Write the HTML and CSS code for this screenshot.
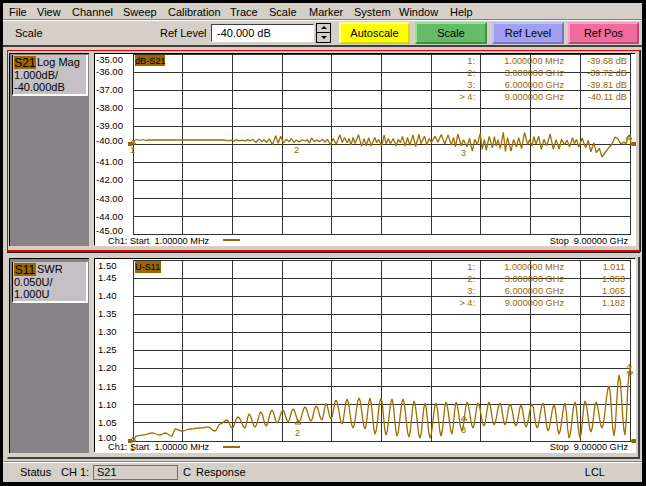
FILE: index.html
```html
<!DOCTYPE html>
<html lang="en">
<head>
    <meta charset="UTF-8">
    <title>Network Analyzer</title>
    <link rel="stylesheet" href="styles.css">
</head>
<body>

    <div class="app">
        <div class="menu">
            <span>File</span>
            <span>View</span>
            <span>Channel</span>
            <span>Sweep</span>
            <span>Calibration</span>
            <span>Trace</span>
            <span>Scale</span>
            <span>Marker</span>
            <span>System</span>
            <span>Window</span>
            <span>Help</span>
        </div>

        <div class="toolbar">
            <span class="tool-title">Scale</span>
            <span class="tool-label">Ref Level</span>
            <div class="input">-40.000 dB</div>
            <div class="spin">
                <div class="spin-btn"><i class="up"></i></div>
                <div class="spin-btn"><i class="down"></i></div>
            </div>
            <div class="btn yellow">Autoscale</div>
            <div class="btn green">Scale</div>
            <div class="btn blue">Ref Level</div>
            <div class="btn pink">Ref Pos</div>
        </div>

        <div class="traces">
            <div class="panel active">
                <div class="side">
                    <div class="info">
                        <div class="info-top"><span class="tag">S21</span><span>Log Mag</span></div>
                        <div>1.000dB/</div>
                        <div>-40.000dB</div>
                    </div>
                </div>
                <svg class="chart chart-top" id="chartTop" viewBox="95 53 541 192">
                    <text class="axis" x="96" y="62">-35.00</text>
                    <text class="axis" x="96" y="74">-36.00</text>
                    <text class="axis" x="96" y="92">-37.00</text>
                    <text class="axis" x="96" y="110">-38.00</text>
                    <text class="axis" x="96" y="128">-39.00</text>
                    <text class="axis" x="96" y="143">-40.00</text>
                    <text class="axis" x="96" y="164">-41.00</text>
                    <text class="axis" x="96" y="182">-42.00</text>
                    <text class="axis" x="96" y="201">-43.00</text>
                    <text class="axis" x="96" y="219">-44.00</text>
                    <text class="axis" x="96" y="233">-45.00</text>

                    <rect class="tag-bg" x="135" y="54" width="30" height="11"></rect>
                    <text x="135" y="63">dB-S21</text>

                    <text class="mk" x="475" y="63" text-anchor="end">1:</text>
                    <text class="mk" x="564" y="63" text-anchor="end">1.000000 MHz</text>
                    <text class="mk" x="627" y="63" text-anchor="end">-39.68 dB</text>
                    <text class="mk" x="475" y="75" text-anchor="end">2:</text>
                    <text class="mk" x="564" y="75" text-anchor="end">3.000000 GHz</text>
                    <text class="mk" x="627" y="75" text-anchor="end">-39.72 dB</text>
                    <text class="mk" x="475" y="87" text-anchor="end">3:</text>
                    <text class="mk" x="564" y="87" text-anchor="end">6.000000 GHz</text>
                    <text class="mk" x="627" y="87" text-anchor="end">-39.81 dB</text>
                    <text class="mk" x="475" y="99" text-anchor="end">&gt; 4:</text>
                    <text class="mk" x="564" y="99" text-anchor="end">9.000000 GHz</text>
                    <text class="mk" x="627" y="99" text-anchor="end">-40.11 dB</text>

                    <text class="mk" x="130" y="152">1</text>
                    <text class="mk" x="294" y="152">2</text>
                    <text class="mk" x="461" y="155">3</text>

                    <text x="108" y="243">Ch1: Start&#160;&#160;1.00000 MHz</text>
                    <rect class="tag-bg" x="223" y="238" width="17" height="2"></rect>
                    <text x="628" y="243" text-anchor="end">Stop&#160;&#160;9.00000 GHz</text>
                </svg>
            </div>

            <div class="panel second">
                <div class="side">
                    <div class="info">
                        <div class="info-top"><span class="tag">S11</span><span>SWR</span></div>
                        <div>0.050U/</div>
                        <div>1.000U</div>
                    </div>
                </div>
                <svg class="chart chart-bottom" id="chartBottom" viewBox="95 259 541 194">
                    <text class="axis" x="98" y="269">1.50</text>
                    <text class="axis" x="98" y="281">1.45</text>
                    <text class="axis" x="98" y="299">1.40</text>
                    <text class="axis" x="98" y="317">1.35</text>
                    <text class="axis" x="98" y="335">1.30</text>
                    <text class="axis" x="98" y="353">1.25</text>
                    <text class="axis" x="98" y="371">1.20</text>
                    <text class="axis" x="98" y="390">1.15</text>
                    <text class="axis" x="98" y="408">1.10</text>
                    <text class="axis" x="98" y="426">1.05</text>
                    <text class="axis" x="98" y="441">1.00</text>

                    <rect class="tag-bg" x="135" y="261" width="26" height="12"></rect>
                    <text x="135" y="270">U-S11</text>

                    <text class="mk" x="475" y="270" text-anchor="end">1:</text>
                    <text class="mk" x="564" y="270" text-anchor="end">1.000000 MHz</text>
                    <text class="mk" x="625" y="270" text-anchor="end">1.011</text>
                    <text class="mk" x="475" y="282" text-anchor="end">2:</text>
                    <text class="mk" x="564" y="282" text-anchor="end">3.000000 GHz</text>
                    <text class="mk" x="625" y="282" text-anchor="end">1.053</text>
                    <text class="mk" x="475" y="294" text-anchor="end">3:</text>
                    <text class="mk" x="564" y="294" text-anchor="end">6.000000 GHz</text>
                    <text class="mk" x="625" y="294" text-anchor="end">1.065</text>
                    <text class="mk" x="475" y="306" text-anchor="end">&gt; 4:</text>
                    <text class="mk" x="564" y="306" text-anchor="end">9.000000 GHz</text>
                    <text class="mk" x="625" y="306" text-anchor="end">1.182</text>

                    <text class="mk" x="130" y="451">1</text>
                    <text class="mk" x="295" y="436">2</text>
                    <text class="mk" x="461" y="433">3</text>
                    <text class="mk" x="626" y="370">4</text>

                    <text x="108" y="450">Ch1: Start&#160;&#160;1.00000 MHz</text>
                    <rect class="tag-bg" x="223" y="446" width="17" height="2"></rect>
                    <text x="628" y="450" text-anchor="end">Stop&#160;&#160;9.00000 GHz</text>
                </svg>
            </div>
        </div>

        <div class="status">
            <span class="status-name">Status</span>
            <span class="status-ch">CH 1:</span>
            <div class="status-field">S21</div>
            <span class="status-c">C</span>
            <span>Response</span>
            <span class="status-lcl">LCL</span>
        </div>
    </div>

    <script src="chart.js"></script>
</body>
</html>
```

FILE: styles.css
```css
* {
    box-sizing: border-box;
}
body {
    margin: 0;
    background: #000;
    font-family: "Liberation Sans", Arial, sans-serif;
    font-size: 11px;
    color: #000;
}
.app {
    width: 646px;
    height: 486px;
    border: solid #000;
    border-width: 3px 4px 4px 3px;
    background: #d4d0c8;
    display: flex;
    flex-direction: column;
    overflow: hidden;
}

/* menu and toolbar */
.menu {
    height: 17px;
    padding: 1px 0 0 6px;
    display: grid;
    grid-template-columns: 28px 35px 51px 45px 62px 39px 40px 45px 45px 51px auto;
    align-items: center;
    border-bottom: 1px solid #808080;
    box-shadow: 0 1px 0 #fff;
}
.toolbar {
    height: 25px;
    display: flex;
    align-items: center;
}
.tool-title {
    margin-left: 12px;
    width: 145px;
}
.tool-label {
    width: 51px;
}
.input {
    width: 103px;
    height: 18px;
    padding: 1px 0 0 5px;
    background: #fff;
    border: 1px solid;
    border-color: #404040 #fff #fff #404040;
    line-height: 15px;
}
.spin {
    margin-left: 2px;
    width: 15px;
    height: 20px;
    display: flex;
    flex-direction: column;
    background: #000;
    padding: 1px;
    gap: 1px;
}
.spin-btn {
    flex: 1;
    background: #d4d0c8;
    display: flex;
    align-items: center;
    justify-content: center;
}
.spin-btn i {
    width: 0;
    height: 0;
    border: 3px solid transparent;
}
.spin-btn .up {
    border-bottom-color: #000;
    border-top-width: 0;
}
.spin-btn .down {
    border-top-color: #000;
    border-bottom-width: 0;
}
.btn {
    width: 72px;
    height: 22px;
    margin-left: 5px;
    border: 2px solid;
    text-align: center;
    line-height: 18px;
}
.yellow {
    width: 71px;
    margin-left: 8px;
    background: #ffff00;
    border-color: #ffff99 #d8d800 #d8d800 #ffff99;
}
.green {
    background: #66bb66;
    border-color: #99e099 #3f8f3f #3f8f3f #99e099;
}
.blue {
    background: #a0a0ee;
    border-color: #c0c0f8 #7878c0 #7878c0 #c0c0f8;
}
.pink {
    width: 71px;
    margin-left: 4px;
    background: #f06c9c;
    border-color: #f8a0c0 #c04878 #c04878 #f8a0c0;
}

/* trace panels */
.traces {
    height: 417px;
    padding: 3px 2px 0 4px;
    border-top: 2px solid #404040;
    border-bottom: 1px solid #808080;
    box-shadow: 0 1px 0 #fff;
}
.panel {
    display: flex;
    height: 202px;
    padding: 2px 3px 4px 1px;
    gap: 6px;
    border: 1px solid #e00000;
    border-bottom-width: 2px;
    box-shadow: 0 1px 0 #222, 1px 0 0 #222;
}
.panel.second {
    margin-top: 5px;
    padding: 1px 2px 4px 1px;
    border-color: transparent #404040 #404040 transparent;
    border-top: 0;
    border-right-width: 2px;
    box-shadow: none;
}
.second .side {
    padding-top: 3px;
}
.side {
    width: 80px;
    background: #868486;
    border-left: 1px solid #000;
    border-top: 1px solid #000;
    padding: 1px 1px 0 2px;
}
.info {
    height: 41px;
    padding: 1px 0 0 1px;
    background: #c4c0c4;
    border-right: 2px solid #fff;
    border-bottom: 2px solid #fff;
    border-left: 1px solid #000;
    line-height: 12px;
}
.info-top {
    display: flex;
    gap: 1px;
    height: 13px;
}
.tag {
    background: #996600;
    width: 22px;
    height: 13px;
    font-size: 12px;
    line-height: 14px;
    text-align: center;
}
.chart {
    display: block;
    flex: none;
    width: 541px;
    margin-top: 1px;
    background: #fff;
    font-size: 9.2px;
    box-shadow: -1px -1px 0 #000;
}
.chart-top {
    height: 192px;
}
.chart-bottom {
    height: 194px;
}
.chart .axis {
    font-size: 9.5px;
}
.chart .mk {
    fill: #996600;
}
.tag-bg {
    fill: #996600;
}
.grid {
    stroke: #333;
    stroke-width: 1;
    shape-rendering: crispEdges;
}
.trace {
    fill: none;
    stroke: #a06c00;
    stroke-width: 1.3;
    stroke-linejoin: bevel;
}
.marker {
    fill: none;
    stroke: #996600;
    stroke-width: 1;
}
.ref {
    fill: #996600;
}

/* status bar */
.status {
    flex: 1;
    display: flex;
    align-items: center;
}
.status-name {
    margin-left: 17px;
    width: 41px;
}
.status-ch {
    width: 32px;
}
.status-field {
    width: 85px;
    height: 15px;
    padding-left: 3px;
    margin-right: 5px;
    border: 1px solid #996633;
    line-height: 13px;
}
.status-c {
    width: 13px;
}
.status-lcl {
    margin-left: auto;
    margin-right: 37px;
}
```

FILE: chart.js
```js
const NS = "http://www.w3.org/2000/svg";

function add(svg, tag, attrs, first) {
    let el = document.createElementNS(NS, tag);
    for (let k in attrs) el.setAttribute(k, attrs[k]);
    if (first) svg.insertBefore(el, svg.firstChild);
    else svg.appendChild(el);
    return el;
}

function drawGrid(svg, rows) {
    let cols = [133, 182, 232, 282, 331, 381, 431, 480, 530, 580, 630];
    let top = rows[0], bottom = rows[rows.length - 1];
    cols.forEach(x => add(svg, "line", { class: "grid", x1: x + 0.5, x2: x + 0.5, y1: top, y2: bottom + 1 }, true));
    rows.forEach(y => add(svg, "line", { class: "grid", x1: 133, x2: 631, y1: y + 0.5, y2: y + 0.5 }, true));
}

function drawTrace(svg, pts) {
    add(svg, "polyline", { class: "trace", points: pts.map(p => p[0].toFixed(1) + "," + p[1].toFixed(1)).join(" ") });
}

function tri(svg, x, y, down) {
    let d = down ? 4 : -4;
    add(svg, "polygon", { class: "marker", points: `${x - 3},${y} ${x + 3},${y} ${x},${y + d}` });
}

// reference arrows on both ends of the grid
function refs(svg, y) {
    add(svg, "polygon", { class: "ref", points: `128,${y - 2} 132,${y - 2} 134,${y} 132,${y + 2} 128,${y + 2}` });
    add(svg, "polygon", { class: "ref", points: `636,${y - 2} 632,${y - 2} 630,${y} 632,${y + 2} 636,${y + 2}` });
}

// top trace: S21, flat then noisier towards the high end
function topTrace() {
    let seed = 17;
    function rnd() {
        seed = (seed * 1103 + 12345) % 65536;
        return seed / 65536 - 0.5;
    }
    function amp(x) {
        if (x < 256) return 2;
        if (x < 270) return 5;
        if (x < 285) return 10;
        if (x < 330) return 5;
        if (x < 455) return 12;
        if (x < 560) return 20;
        return 14;
    }
    let pts = [[133, 143], [134, 139.5], [137, 138.5], [140, 139.5], [143, 138.5], [146, 139.5], [149, 139], [224, 139]];
    let x = 226, up = true;
    while (x < 600) {
        let a = amp(x) * (0.2 + Math.abs(rnd()) * 1.6);
        let mean = x < 460 ? 139.5 : 141;
        if (x > 575) mean = 142 + (x - 575) * 0.28;
        pts.push([x, mean + (up ? -a / 2 : a / 2)]);
        up = !up;
        x += 1.8 + Math.abs(rnd()) * 3.6;
    }
    pts.push([602, 156], [607, 149], [612, 143], [615, 136], [618, 138], [621, 143], [624, 141], [626, 143], [628, 136], [630, 134], [631, 143]);
    return pts;
}

// bottom trace: S11, ripple given as alternating extrema
const extrema = [
    [133, 441], [136, 436], [143, 435], [152, 433], [160, 435], [165, 433], [172, 436], [175, 429], [182, 431],
    [190, 429], [200, 428], [208, 427], [215, 431], [220, 424], [227, 420], [232, 428], [238, 417], [245, 428],
    [249, 414], [255, 427], [261, 412], [266, 426], [272, 410], [277, 423], [283, 410], [288, 422], [293, 409],
    [299, 422], [305, 407], [311, 421], [316, 406], [322, 420], [326, 403.5], [331, 419], [336, 400], [342, 424],
    [347, 399], [353, 428], [359, 398], [365, 429], [370, 398], [375, 434], [381, 398], [386, 435], [392, 399],
    [397, 436], [403, 399], [409, 437], [414, 401], [420, 438], [425, 403], [430, 438], [436, 403], [441, 436],
    [446, 402], [452, 434], [456, 402], [462, 431], [467, 402], [473, 428], [478, 403], [484, 426], [489, 402],
    [494, 425], [500, 403], [505, 425], [510, 404], [516, 426], [521, 405], [526, 427], [532, 404], [537, 428],
    [543, 403], [548, 431], [554, 405], [559, 434], [565, 403], [569, 438], [575, 402], [580, 438], [585, 401],
    [591, 432], [596, 402], [602, 428], [609, 386], [614, 436], [619, 375], [625, 435], [629, 374], [631, 366]
];

function bottomTrace() {
    let pts = [];
    for (let i = 0; i < extrema.length - 1; i++) {
        let a = extrema[i], b = extrema[i + 1];
        let steps = Math.max(1, Math.round((b[0] - a[0]) / 1.3));
        for (let s = 0; s < steps; s++) {
            let t = s / steps;
            pts.push([a[0] + (b[0] - a[0]) * t, a[1] + (b[1] - a[1]) * (1 - Math.cos(Math.PI * t)) / 2]);
        }
    }
    pts.push(extrema[extrema.length - 1]);
    return pts;
}

let chartTop = document.getElementById("chartTop");
drawGrid(chartTop, [53, 71, 89, 107, 125, 143, 161, 179, 197, 215, 233]);
drawTrace(chartTop, topTrace());
refs(chartTop, 143);
tri(chartTop, 133, 143);
tri(chartTop, 629, 138);

let chartBottom = document.getElementById("chartBottom");
drawGrid(chartBottom, [260, 278, 296, 314, 332, 350, 368, 386, 404, 422, 441]);
drawTrace(chartBottom, bottomTrace());
refs(chartBottom, 441);
tri(chartBottom, 133, 441);
tri(chartBottom, 298, 424);
tri(chartBottom, 464, 420);
tri(chartBottom, 630, 372, true);
```
